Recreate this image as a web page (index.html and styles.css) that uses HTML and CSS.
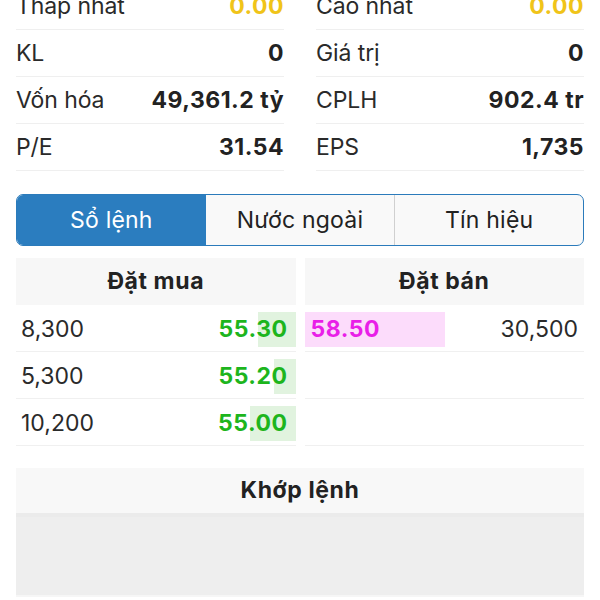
FILE: index.html
```html
<!DOCTYPE html>
<html lang="vi">
<head>
<meta charset="utf-8">
<title>Sổ lệnh</title>
<link rel="stylesheet" href="styles.css">
</head>
<body>
<div class="page">
  <div class="stats">
    <div class="stat"><span class="lbl">Thấp nhất</span><span class="val yellow">0.00</span></div>
    <div class="stat"><span class="lbl">Cao nhất</span><span class="val yellow">0.00</span></div>
    <div class="stat"><span class="lbl">KL</span><span class="val">0</span></div>
    <div class="stat"><span class="lbl">Giá trị</span><span class="val">0</span></div>
    <div class="stat"><span class="lbl">Vốn hóa</span><span class="val">49,361.2 tỷ</span></div>
    <div class="stat"><span class="lbl">CPLH</span><span class="val">902.4 tr</span></div>
    <div class="stat"><span class="lbl">P/E</span><span class="val">31.54</span></div>
    <div class="stat"><span class="lbl">EPS</span><span class="val">1,735</span></div>
  </div>

  <div class="tabs">
    <div class="tab active">Sổ lệnh</div>
    <div class="tab">Nước ngoài</div>
    <div class="tab last">Tín hiệu</div>
  </div>

  <div class="book">
    <div class="side">
      <div class="head">Đặt mua</div>
      <div class="row buy"><span class="bar buybar" style="width:38px"></span><span class="vol">8,300</span><span class="price green">55.30</span></div>
      <div class="row buy"><span class="bar buybar" style="width:22px"></span><span class="vol">5,300</span><span class="price green">55.20</span></div>
      <div class="row buy"><span class="bar buybar" style="width:46px"></span><span class="vol">10,200</span><span class="price green">55.00</span></div>
    </div>
    <div class="side">
      <div class="head">Đặt bán</div>
      <div class="row sell"><span class="bar sellbar" style="width:140px"></span><span class="price magenta">58.50</span><span class="vol">30,500</span></div>
      <div class="row sell"></div>
      <div class="row sell"></div>
    </div>
  </div>

  <div class="match">
    <div class="head">Khớp lệnh</div>
    <div class="match-body"></div>
  </div>
</div>
</body>
</html>
```
FILE: styles.css
```css
* { box-sizing: border-box; }
html, body { margin: 0; padding: 0; background: #fff; }
body {
  font-family: "Inter", "Liberation Sans", Arial, sans-serif;
  color: #222;
  font-size: 23px;
  overflow: hidden;
}
.page { padding: 0 16px; }

.stats {
  display: grid;
  grid-template-columns: 1fr 1fr;
  column-gap: 32px;
  margin-top: -17px;
}
.stat {
  height: 47px;
  display: flex;
  align-items: center;
  justify-content: space-between;
  border-bottom: 1px solid #efefef;
}
.lbl { color: #2a2a2a; letter-spacing: -0.1px; }
.val { font-weight: 700; color: #222; letter-spacing: 0.5px; }
.yellow { color: #f0c419; }

.tabs {
  margin-top: 23px;
  height: 52px;
  display: grid;
  grid-template-columns: 1fr 1fr 1fr;
  border: 1px solid #2b7bbb;
  border-radius: 7px;
  overflow: hidden;
  background: #f9f9f9;
}
.tab {
  display: flex;
  align-items: center;
  justify-content: center;
  color: #222;
  letter-spacing: 0.2px;
}
.tab.active { background: #2b7dbf; color: #fff; }
.tab.last { border-left: 1px solid #d0d0d0; }

.book {
  margin-top: 12px;
  display: grid;
  grid-template-columns: 1fr 1fr;
  column-gap: 9px;
}
.head {
  height: 47px;
  background: #f7f7f7;
  display: flex;
  align-items: center;
  justify-content: center;
  font-weight: 700;
  color: #222;
  letter-spacing: 0.6px;
  padding-bottom: 2px;
}
.row {
  position: relative;
  height: 47px;
  display: flex;
  align-items: center;
  justify-content: space-between;
  border-bottom: 1px solid #f0f0f0;
  padding-top: 2px;
}
.row.buy { padding-left: 5px; padding-right: 8px; }
.row.sell { padding-left: 6px; padding-right: 6px; }
.bar {
  position: absolute;
  top: 7px;
  height: 35px;
}
.buybar { right: 0; background: #e1f3df; }
.sellbar { left: 0; background: #fcdcfb; }
.vol, .price { position: relative; }
.vol { color: #2a2a2a; }
.price { font-weight: 700; letter-spacing: 0.5px; }
.green { color: #1db51d; }
.magenta { color: #e91ee8; }

.match { margin-top: 22px; }
.match .head { background: #f8f8f8; height: 45px; }
.match-body {
  height: 84px;
  background: #eeeeee;
  border-top: 4px solid #ebebeb;
  border-bottom: 2px solid #f6f6f6;
}
```
